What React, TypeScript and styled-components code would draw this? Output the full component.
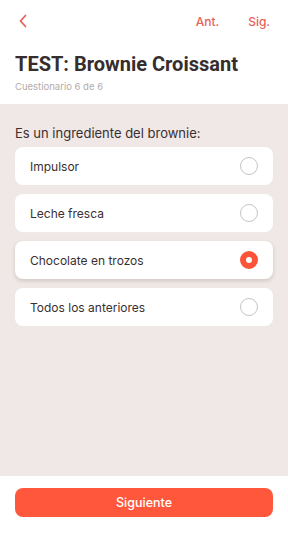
import React, { useState } from 'react';
import styled, { createGlobalStyle } from 'styled-components';

const GlobalStyle = createGlobalStyle`
  html, body {
    margin: 0;
    padding: 0;
    background: #ffffff;
  }
  * {
    box-sizing: border-box;
  }
`;

const Screen = styled.div`
  width: 288px;
  height: 534px;
  display: flex;
  flex-direction: column;
  font-family: Inter, 'Noto Sans', sans-serif;
  color: #3a2f2f;
`;

const Header = styled.header`
  height: 104px;
  background: #ffffff;
  padding: 0 15px;
  display: flex;
  flex-direction: column;
`;

const TopBar = styled.div`
  height: 42px;
  display: flex;
  align-items: center;
  justify-content: space-between;
`;

const BackButton = styled.button`
  border: none;
  background: none;
  padding: 0 0 0 3px;
  display: flex;
  align-items: center;
  cursor: pointer;
`;

const NavLinks = styled.div`
  display: flex;
  gap: 29px;
  padding-right: 3px;
`;

const NavLink = styled.span`
  font-family: Inter, sans-serif;
  font-size: 12px;
  font-weight: 500;
  color: #e8625a;
`;

const Title = styled.h1`
  margin: 10px 0 0;
  font-family: Roboto, 'Liberation Sans', sans-serif;
  font-size: 20px;
  font-weight: 700;
  line-height: 24px;
  color: #372d2d;
`;

const Subtitle = styled.div`
  margin-top: 5px;
  font-size: 9.5px;
  color: #b3abab;
`;

const Main = styled.main`
  flex: 1;
  background: #efe8e6;
  padding: 20px 15px 0;
  display: flex;
  flex-direction: column;
`;

const Question = styled.div`
  font-size: 13px;
  color: #3a2f2f;
  line-height: 18px;
  margin-bottom: 5px;
`;

const Options = styled.div`
  display: flex;
  flex-direction: column;
  gap: 9px;
`;

const OptionCard = styled.div<{ $selected: boolean }>`
  height: 38px;
  background: #ffffff;
  border-radius: 8px;
  padding: 0 15px;
  display: flex;
  align-items: center;
  justify-content: space-between;
  font-size: 12px;
  color: #3a2f2f;
  cursor: pointer;
  box-shadow: ${(p) => (p.$selected ? '0 2px 4px rgba(80, 50, 40, 0.18)' : 'none')};
`;

const Radio = styled.span<{ $selected: boolean }>`
  width: 18px;
  height: 18px;
  border-radius: 50%;
  border: ${(p) => (p.$selected ? '6px solid #fa5337' : '1px solid #c9c3c3')};
  background: #ffffff;
`;

const Footer = styled.footer`
  height: 58px;
  background: #ffffff;
  padding: 12px 15px 0;
`;

const NextButton = styled.button`
  width: 100%;
  height: 29px;
  border: none;
  border-radius: 8px;
  background: #ff573b;
  color: #ffffff;
  font-family: Inter, sans-serif;
  font-size: 12.5px;
  font-weight: 500;
  cursor: pointer;
`;

const options = ['Impulsor', 'Leche fresca', 'Chocolate en trozos', 'Todos los anteriores'];

const App = () => {
  const [selected, setSelected] = useState(2);

  return (
    <Screen>
      <GlobalStyle />
      <Header>
        <TopBar>
          <BackButton aria-label="Volver">
            <svg width="10" height="14" viewBox="0 0 10 14" fill="none">
              <path d="M7.5 1.5L2.5 7l5 5.5" stroke="#e8625a" strokeWidth="1.8" strokeLinecap="round" strokeLinejoin="round" />
            </svg>
          </BackButton>
          <NavLinks>
            <NavLink>Ant.</NavLink>
            <NavLink>Sig.</NavLink>
          </NavLinks>
        </TopBar>
        <Title>TEST: Brownie Croissant</Title>
        <Subtitle>Cuestionario 6 de 6</Subtitle>
      </Header>
      <Main>
        <Question>Es un ingrediente del brownie:</Question>
        <Options>
          {options.map((label, idx) => (
            <OptionCard key={label} $selected={idx === selected} onClick={() => setSelected(idx)}>
              {label}
              <Radio $selected={idx === selected} />
            </OptionCard>
          ))}
        </Options>
      </Main>
      <Footer>
        <NextButton>Siguiente</NextButton>
      </Footer>
    </Screen>
  );
};

export default App;
